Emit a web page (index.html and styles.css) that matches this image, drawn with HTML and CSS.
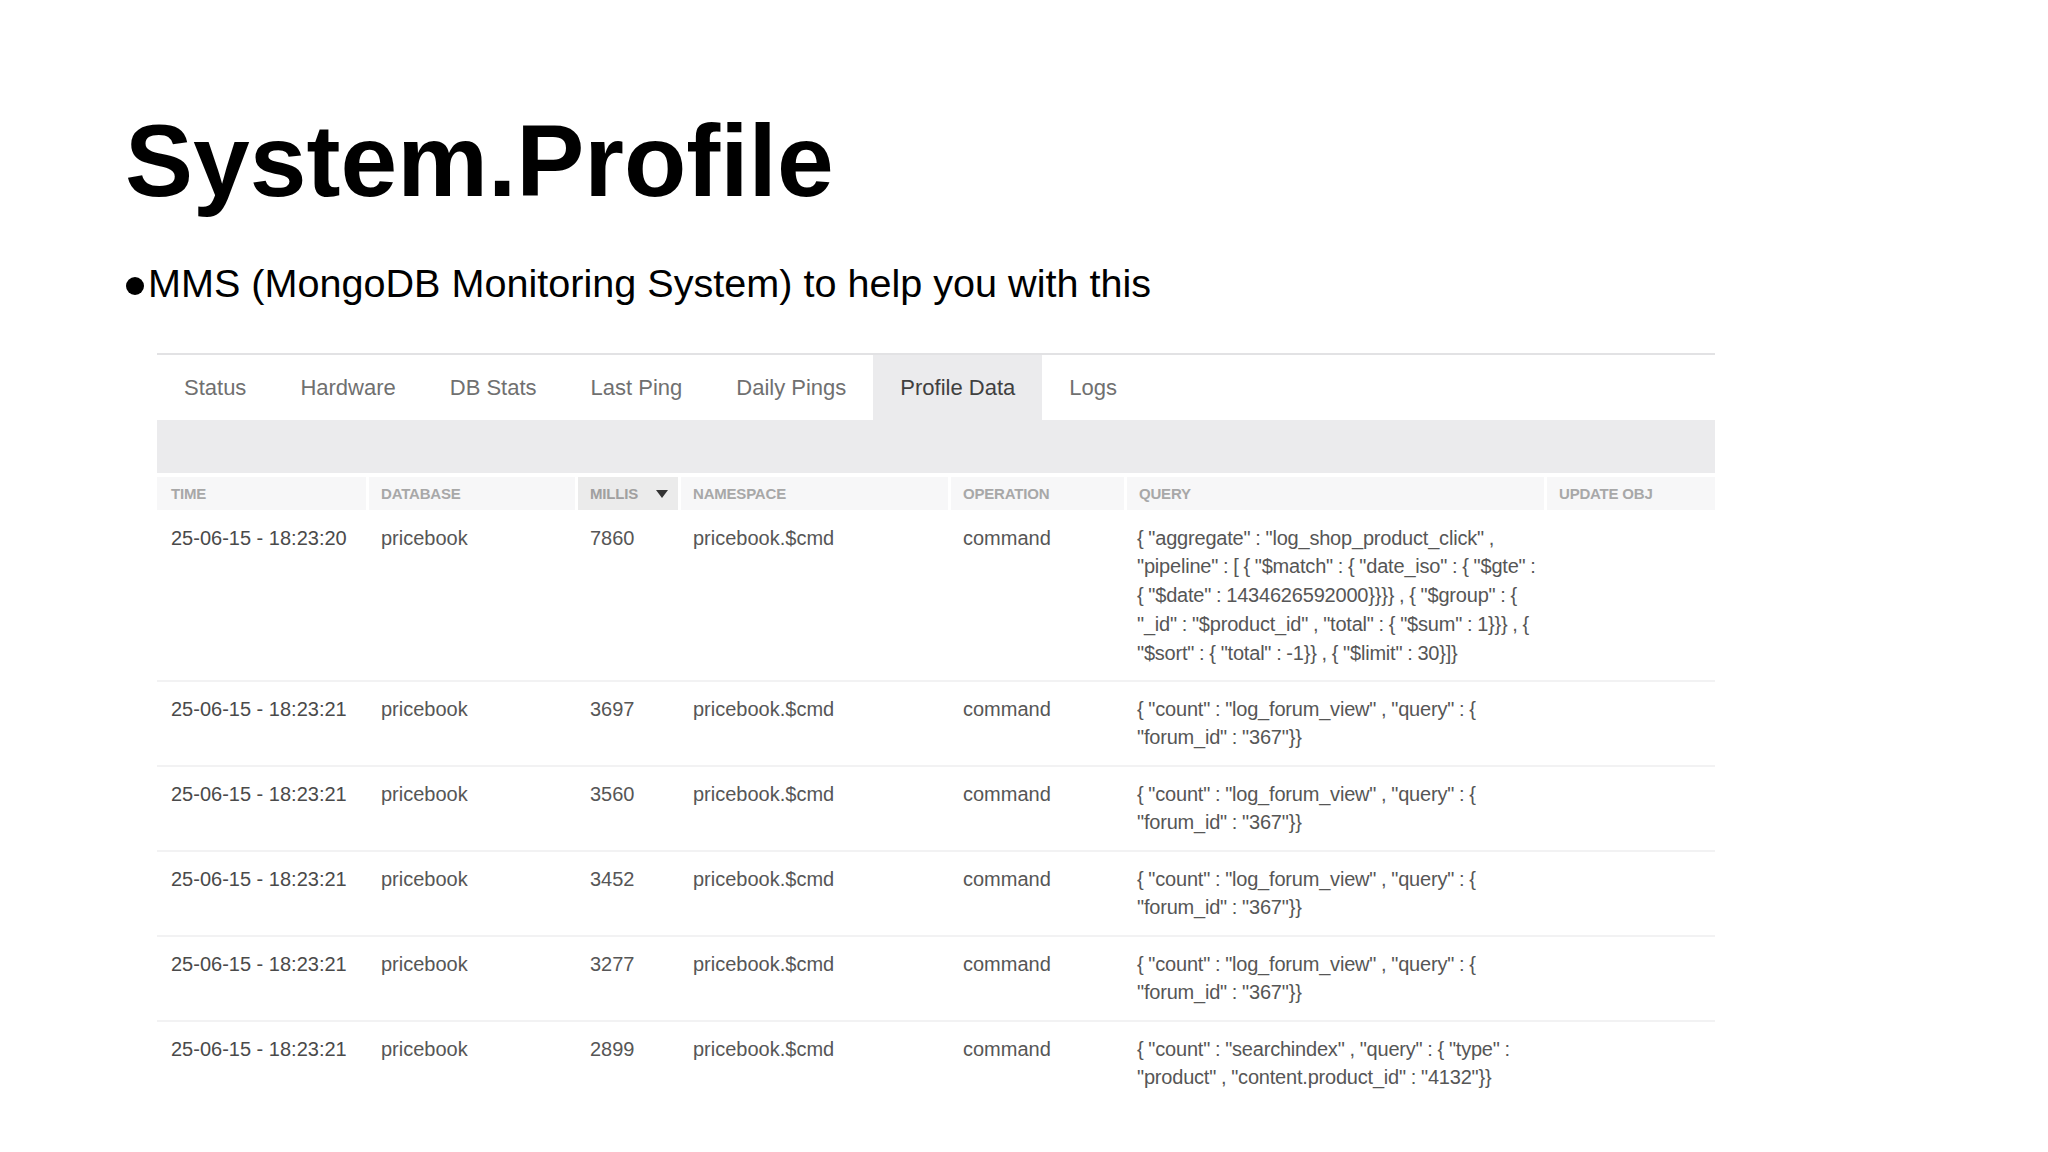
FILE: index.html
```html
<!DOCTYPE html>
<html lang="en">
<head>
<meta charset="utf-8">
<title>System.Profile</title>
<link rel="stylesheet" href="styles.css">
</head>
<body>
<div class="slide">
  <h1 class="title">System.Profile</h1>
  <p class="bullet"><span class="dot"></span>MMS (MongoDB Monitoring System) to help you with this</p>

  <div class="panel">
    <div class="tabs">
      <div class="tab">Status</div>
      <div class="tab">Hardware</div>
      <div class="tab">DB Stats</div>
      <div class="tab">Last Ping</div>
      <div class="tab">Daily Pings</div>
      <div class="tab active">Profile Data</div>
      <div class="tab">Logs</div>
    </div>
    <div class="band"></div>

    <div class="table">
      <div class="row head">
        <div class="hcell first">TIME</div>
        <div class="hcell">DATABASE</div>
        <div class="hcell sorted">MILLIS<span class="arrow"></span></div>
        <div class="hcell">NAMESPACE</div>
        <div class="hcell">OPERATION</div>
        <div class="hcell">QUERY</div>
        <div class="hcell">UPDATE OBJ</div>
      </div>

      <div class="row data firstrow">
        <div class="cell first time">25-06-15 - 18:23:20</div>
        <div class="cell">pricebook</div>
        <div class="cell">7860</div>
        <div class="cell">pricebook.$cmd</div>
        <div class="cell">command</div>
        <div class="cell query">
          <span class="ln">{ "aggregate" : "log_shop_product_click" ,</span>
          <span class="ln">"pipeline" : [ { "$match" : { "date_iso" : { "$gte" :</span>
          <span class="ln">{ "$date" : 1434626592000}}}} , { "$group" : {</span>
          <span class="ln">"_id" : "$product_id" , "total" : { "$sum" : 1}}} , {</span>
          <span class="ln">"$sort" : { "total" : -1}} , { "$limit" : 30}]}</span>
        </div>
        <div class="cell"></div>
      </div>

      <div class="row data">
        <div class="cell first time">25-06-15 - 18:23:21</div>
        <div class="cell">pricebook</div>
        <div class="cell">3697</div>
        <div class="cell">pricebook.$cmd</div>
        <div class="cell">command</div>
        <div class="cell query">
          <span class="ln">{ "count" : "log_forum_view" , "query" : {</span>
          <span class="ln">"forum_id" : "367"}}</span>
        </div>
        <div class="cell"></div>
      </div>

      <div class="row data">
        <div class="cell first time">25-06-15 - 18:23:21</div>
        <div class="cell">pricebook</div>
        <div class="cell">3560</div>
        <div class="cell">pricebook.$cmd</div>
        <div class="cell">command</div>
        <div class="cell query">
          <span class="ln">{ "count" : "log_forum_view" , "query" : {</span>
          <span class="ln">"forum_id" : "367"}}</span>
        </div>
        <div class="cell"></div>
      </div>

      <div class="row data">
        <div class="cell first time">25-06-15 - 18:23:21</div>
        <div class="cell">pricebook</div>
        <div class="cell">3452</div>
        <div class="cell">pricebook.$cmd</div>
        <div class="cell">command</div>
        <div class="cell query">
          <span class="ln">{ "count" : "log_forum_view" , "query" : {</span>
          <span class="ln">"forum_id" : "367"}}</span>
        </div>
        <div class="cell"></div>
      </div>

      <div class="row data">
        <div class="cell first time">25-06-15 - 18:23:21</div>
        <div class="cell">pricebook</div>
        <div class="cell">3277</div>
        <div class="cell">pricebook.$cmd</div>
        <div class="cell">command</div>
        <div class="cell query">
          <span class="ln">{ "count" : "log_forum_view" , "query" : {</span>
          <span class="ln">"forum_id" : "367"}}</span>
        </div>
        <div class="cell"></div>
      </div>

      <div class="row data">
        <div class="cell first time">25-06-15 - 18:23:21</div>
        <div class="cell">pricebook</div>
        <div class="cell">2899</div>
        <div class="cell">pricebook.$cmd</div>
        <div class="cell">command</div>
        <div class="cell query">
          <span class="ln">{ "count" : "searchindex" , "query" : { "type" :</span>
          <span class="ln">"product" , "content.product_id" : "4132"}}</span>
        </div>
        <div class="cell"></div>
      </div>
    </div>
  </div>
</div>
</body>
</html>
```

FILE: styles.css
```css
html, body {
  margin: 0;
  padding: 0;
  background: #ffffff;
}

body {
  width: 2048px;
  height: 1152px;
  overflow: hidden;
  font-family: "Liberation Sans", Arial, Helvetica, sans-serif;
  color: #000;
}

.slide {
  padding: 110px 0 0 125px;
}

.title {
  margin: 0;
  font-size: 102px;
  line-height: 102px;
  font-weight: bold;
  color: #000;
}

.bullet {
  margin: 51px 0 0 0;
  font-size: 39.6px;
  line-height: 40px;
  color: #000;
}

.dot {
  display: inline-block;
  width: 18px;
  height: 18px;
  border-radius: 50%;
  background: #000;
  margin: 0 4px 0 1px;
  vertical-align: 2px;
}

.panel {
  margin: 50px 0 0 32px;
  width: 1558px;
  border-top: 2px solid #e2e2e4;
}

.tabs {
  display: flex;
  height: 65px;
}

.tab {
  display: flex;
  align-items: center;
  padding: 0 27px;
  font-size: 22px;
  color: #707070;
}

.tab.active {
  background: #ebebed;
  color: #404040;
}

.band {
  height: 53px;
  background: #ebebed;
}

.row {
  display: grid;
  grid-template-columns: 209px 209px 103px 270px 176px 420px 171px;
}

.head {
  margin-top: 4px;
  height: 33px;
}

.hcell {
  display: flex;
  align-items: center;
  background: #f7f7f8;
  border-left: 3px solid #fff;
  padding-left: 12px;
  font-size: 15px;
  font-weight: bold;
  color: #a8a8a8;
  letter-spacing: -0.2px;
}

.hcell.first {
  border-left: none;
  padding-left: 14px;
}

.hcell.sorted {
  background: #ebebeb;
  color: #a0a0a0;
}

.arrow {
  display: inline-block;
  width: 0;
  height: 0;
  margin-left: 18px;
  border-left: 6.5px solid transparent;
  border-right: 6.5px solid transparent;
  border-top: 8px solid #333;
}

.data {
  border-top: 2px solid #f2f2f3;
  padding: 12.7px 0;
}

.data.firstrow {
  border-top: none;
  padding: 13.6px 0 12.4px 0;
}

.cell {
  padding-left: 15px;
  font-size: 20px;
  line-height: 28.8px;
  color: #565656;
  white-space: nowrap;
}

.cell.first {
  padding-left: 14px;
}

.cell.time {
  color: #4a4a4a;
}

.cell.query {
  padding-left: 13px;
  letter-spacing: -0.2px;
  word-spacing: -0.5px;
}

.query .ln {
  display: block;
}
```
